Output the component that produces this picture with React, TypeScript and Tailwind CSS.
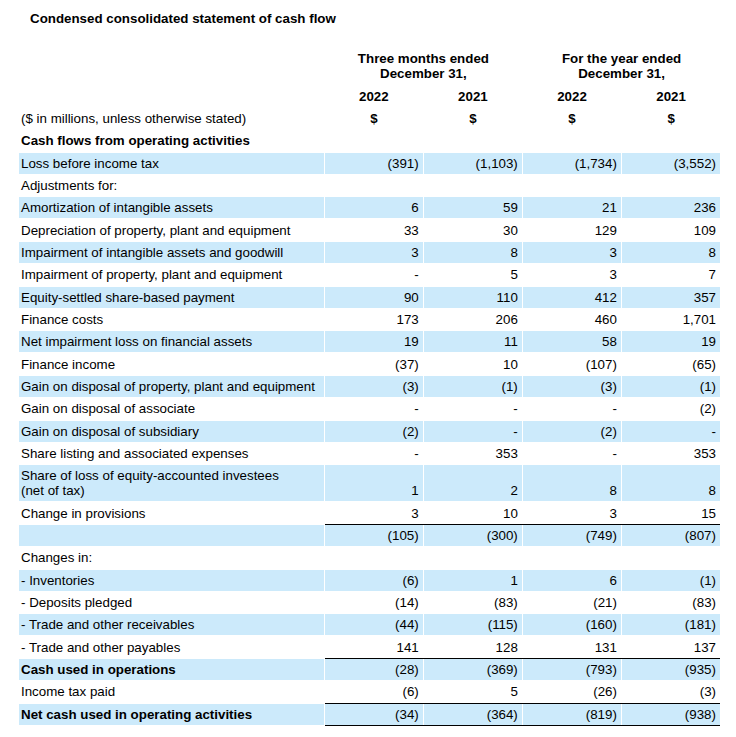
import React from 'react';

type Row = {
  label: React.ReactNode;
  vals?: string[];
  band?: boolean;
  bold?: boolean;
  lineAbove?: boolean;
  lineBelow?: boolean;
  tall?: boolean;
};

const rows: Row[] = [
  { label: 'Loss before income tax', vals: ['(391)', '(1,103)', '(1,734)', '(3,552)'], band: true },
  { label: 'Adjustments for:' },
  { label: 'Amortization of intangible assets', vals: ['6', '59', '21', '236'], band: true },
  { label: 'Depreciation of property, plant and equipment', vals: ['33', '30', '129', '109'] },
  { label: 'Impairment of intangible assets and goodwill', vals: ['3', '8', '3', '8'], band: true },
  { label: 'Impairment of property, plant and equipment', vals: ['-', '5', '3', '7'] },
  { label: 'Equity-settled share-based payment', vals: ['90', '110', '412', '357'], band: true },
  { label: 'Finance costs', vals: ['173', '206', '460', '1,701'] },
  { label: 'Net impairment loss on financial assets', vals: ['19', '11', '58', '19'], band: true },
  { label: 'Finance income', vals: ['(37)', '10', '(107)', '(65)'] },
  { label: 'Gain on disposal of property, plant and equipment', vals: ['(3)', '(1)', '(3)', '(1)'], band: true },
  { label: 'Gain on disposal of associate', vals: ['-', '-', '-', '(2)'] },
  { label: 'Gain on disposal of subsidiary', vals: ['(2)', '-', '(2)', '-'], band: true },
  { label: 'Share listing and associated expenses', vals: ['-', '353', '-', '353'] },
  {
    label: (
      <>
        Share of loss of equity-accounted investees
        <br />
        (net of tax)
      </>
    ),
    vals: ['1', '2', '8', '8'],
    band: true,
    tall: true,
  },
  { label: 'Change in provisions', vals: ['3', '10', '3', '15'] },
  { label: '', vals: ['(105)', '(300)', '(749)', '(807)'], band: true, lineAbove: true },
  { label: 'Changes in:' },
  { label: '- Inventories', vals: ['(6)', '1', '6', '(1)'], band: true },
  { label: '- Deposits pledged', vals: ['(14)', '(83)', '(21)', '(83)'] },
  { label: '- Trade and other receivables', vals: ['(44)', '(115)', '(160)', '(181)'], band: true },
  { label: '- Trade and other payables', vals: ['141', '128', '131', '137'] },
  { label: 'Cash used in operations', vals: ['(28)', '(369)', '(793)', '(935)'], band: true, bold: true, lineAbove: true },
  { label: 'Income tax paid', vals: ['(6)', '5', '(26)', '(3)'] },
  {
    label: 'Net cash used in operating activities',
    vals: ['(34)', '(364)', '(819)', '(938)'],
    band: true,
    bold: true,
    lineAbove: true,
    lineBelow: true,
  },
];

function DataRow({ r }: { r: Row }) {
  const bg = r.band ? 'bg-[#cceafb]' : '';
  const h = r.tall ? 'h-[36px]' : 'h-[21px]';
  return (
    <div className={`flex ${r.lineAbove ? '-mt-px' : ''}`}>
      <div
        className={`w-[304.67px] shrink-0 pl-[2px] py-[3px] leading-[15px] ${h} ${bg} ${r.bold ? 'font-bold' : ''} ${
          r.lineAbove ? 'mt-px' : ''
        }`}
      >
        {r.label}
      </div>
      <div
        className={`ml-[1.33px] w-[395px] shrink-0 grid grid-cols-4 gap-x-[1.33px] ${
          r.lineAbove ? 'border-t border-black' : ''
        } ${r.lineBelow ? 'border-b border-black' : ''}`}
      >
        {[0, 1, 2, 3].map((i) => (
          <div
            key={i}
            className={`flex items-end justify-end pr-[4px] pb-[3px] leading-[15px] ${h} ${bg}`}
          >
            {r.vals ? r.vals[i] : ''}
          </div>
        ))}
      </div>
    </div>
  );
}

export default function App() {
  return (
    <div className="w-[736px] h-[737px] bg-white text-black text-[13.33px] font-['Liberation_Sans',Arial,sans-serif] pl-[19px]">
      <div className="h-[48.33px] pl-[11px] pt-[11px] leading-[15px] font-bold">
        Condensed consolidated statement of cash flow
      </div>
      <div className="flex flex-col gap-y-[1.33px]">
        <div className="flex">
          <div className="w-[304.67px] shrink-0 h-[36px]" />
          <div className="ml-[1.33px] w-[395px] shrink-0 grid grid-cols-2 gap-x-[1.33px] font-bold leading-[15px]">
            <div className="h-[36px] py-[3px] text-center">
              Three months ended
              <br />
              December 31,
            </div>
            <div className="h-[36px] py-[3px] text-center">
              For the year ended
              <br />
              December 31,
            </div>
          </div>
        </div>
        <div className="flex">
          <div className="w-[304.67px] shrink-0 h-[21px]" />
          <div className="ml-[1.33px] w-[395px] shrink-0 grid grid-cols-4 gap-x-[1.33px] font-bold leading-[15px]">
            {['2022', '2021', '2022', '2021'].map((y, i) => (
              <div key={i} className="h-[21px] py-[3px] text-center">
                {y}
              </div>
            ))}
          </div>
        </div>
        <div className="flex">
          <div className="w-[304.67px] shrink-0 h-[21px] pl-[2px] py-[3px] leading-[15px]">
            ($ in millions, unless otherwise stated)
          </div>
          <div className="ml-[1.33px] w-[395px] shrink-0 grid grid-cols-4 gap-x-[1.33px] font-bold leading-[15px]">
            {[0, 1, 2, 3].map((i) => (
              <div key={i} className="h-[21px] py-[3px] text-center">
                $
              </div>
            ))}
          </div>
        </div>
        <div className="flex">
          <div className="w-[304.67px] shrink-0 h-[21px] pl-[2px] py-[3px] leading-[15px] font-bold">
            Cash flows from operating activities
          </div>
        </div>
        {rows.map((r, i) => (
          <DataRow key={i} r={r} />
        ))}
      </div>
    </div>
  );
}
